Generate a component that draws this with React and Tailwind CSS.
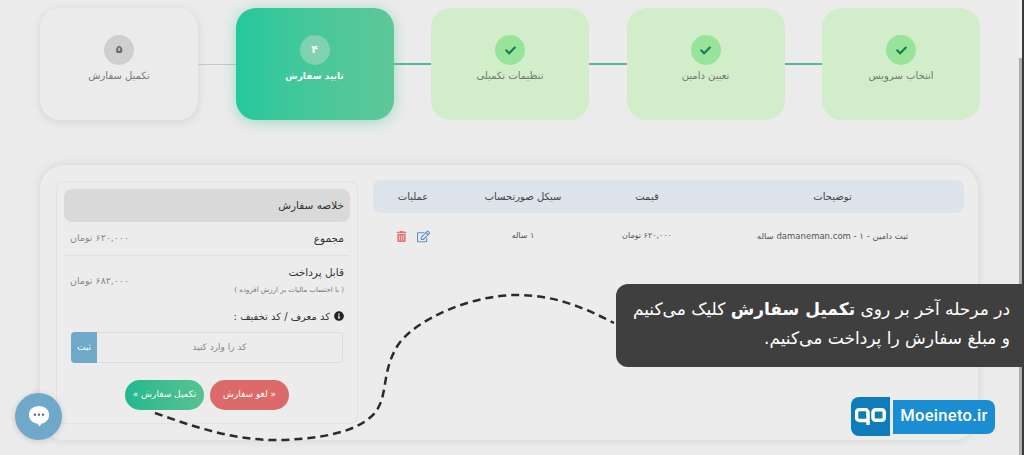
import React from 'react';
import { FaCheck, FaInfoCircle, FaRegEdit, FaTrashAlt } from 'react-icons/fa';

const font = 'font-["DejaVu_Sans","Noto_Sans",sans-serif]';

function StepCard({ label, mark, state }) {
  const cardClass = {
    todo: 'bg-[#ebebeb] shadow-[0_2px_10px_rgba(0,0,0,0.1)] text-[#777]',
    active: 'bg-gradient-to-r from-[#22c89c] to-[#5ec798] shadow-[0_2px_14px_rgba(40,190,140,0.4)] text-white font-bold',
    done: 'bg-[#d2edc9] text-[#6d7a6d]',
  }[state];
  const circleClass = {
    todo: 'bg-[#cfcfcf] text-[#666]',
    active: 'bg-[#7fd1b0] text-white',
    done: 'bg-[#98e49a] text-[#17804f]',
  }[state];

  return (
    <div className={`w-[158px] h-[112px] shrink-0 rounded-[20px] flex flex-col items-center pt-[27px] ${cardClass}`}>
      <div className={`w-[30px] h-[30px] rounded-full flex items-center justify-center text-[11px] font-bold ${circleClass}`}>
        {mark}
      </div>
      <div dir="rtl" className={`mt-[3px] leading-[16px] ${state === 'active' ? 'text-[9px]' : 'text-[10px]'}`}>{label}</div>
    </div>
  );
}

function Connector({ done }) {
  return (
    <div className="flex-1 h-[112px] flex items-center">
      <div className={`w-full ${done ? 'h-[2px] bg-[#58b7a0]' : 'h-px bg-[#bfcac6]'}`} />
    </div>
  );
}

function Steps() {
  return (
    <div className="flex">
      <StepCard label="تکمیل سفارش" mark="۵" state="todo" />
      <Connector />
      <StepCard label="تایید سفارش" mark="۴" state="active" />
      <Connector done />
      <StepCard label="تنظیمات تکمیلی" mark={<FaCheck size={11} />} state="done" />
      <Connector done />
      <StepCard label="تعیین دامین" mark={<FaCheck size={11} />} state="done" />
      <Connector done />
      <StepCard label="انتخاب سرویس" mark={<FaCheck size={11} />} state="done" />
    </div>
  );
}

function Summary() {
  return (
    <div dir="rtl" className="w-[302px] h-[243px] shrink-0 mt-px border border-[#e2e2e2] rounded-lg px-[7px] pt-[7px] text-[#333]">
      <div className="h-[33px] bg-[#d9d9d9] rounded-lg flex items-center px-[6px] text-[10.5px]">خلاصه سفارش</div>
      <div className="h-[34px] flex items-center justify-between px-[6px] border-b border-[#e0e0e0] text-[10.5px]">
        <span>مجموع</span>
        <span className="text-[#888] text-[9.5px]">۶۲۰,۰۰۰ تومان</span>
      </div>
      <div className="h-[50px] flex items-center justify-between px-[6px]">
        <div className="-mt-[2px]">
          <div className="text-[10.5px] leading-[16px]">قابل پرداخت</div>
          <div className="text-[7px] text-[#777] mt-[5px]">( با احتساب مالیات بر ارزش افزوده )</div>
        </div>
        <span className="text-[#888] text-[9.5px]">۶۸۲,۰۰۰ تومان</span>
      </div>
      <div className="flex items-center gap-1 px-[6px] mt-[3px] text-[10px] h-[14px]">
        <FaInfoCircle size={10} className="text-[#222]" />
        <span>کد معرف / کد تخفیف :</span>
      </div>
      <div className="mx-[7px] mt-[9px] h-[31px] flex border border-[#dcdcdc] rounded">
        <div className="flex-1 flex items-center justify-center text-[9px] text-[#888]">کد را وارد کنید</div>
        <div className="w-[26px] -my-px -ml-px bg-[#6fa8c9] rounded-l flex items-center justify-center text-white text-[9px]">ثبت</div>
      </div>
      <div className="flex justify-center gap-[6px] mt-[17px]">
        <button className="w-[79px] h-[30px] rounded-full bg-[#dc6a6a] text-white text-[9px]">« لغو سفارش</button>
        <button className="w-[79px] h-[30px] rounded-full bg-gradient-to-l from-[#56c292] to-[#1fb88e] text-white text-[9px]">تکمیل سفارش »</button>
      </div>
    </div>
  );
}

function OrderTable() {
  const cols = 'grid grid-cols-[80px_140px_108px_263px] text-center items-center';
  return (
    <div className="flex-1">
      <div className={`${cols} h-[33px] bg-[#dce3ea] rounded-lg text-[10px] text-[#444]`}>
        <span dir="rtl">عملیات</span>
        <span dir="rtl">سیکل صورتحساب</span>
        <span dir="rtl">قیمت</span>
        <span dir="rtl">توضیحات</span>
      </div>
      <div className={`${cols} h-[46px] text-[8px] text-[#555]`}>
        <span className="flex justify-center items-center gap-[10px]">
          <FaTrashAlt size={11} className="text-[#e57373]" />
          <FaRegEdit size={13} className="text-[#5b93c7]" />
        </span>
        <span dir="rtl">۱ ساله</span>
        <span dir="rtl">۶۲۰,۰۰۰ تومان</span>
        <span dir="rtl" className="text-[8.5px]">ثبت دامین - ۱ - damaneman.com ساله</span>
      </div>
    </div>
  );
}

export default function App() {
  return (
    <div className={`relative h-[455px] w-[1024px] overflow-hidden flex bg-[#ebebeb] ${font}`}>
      <div className="flex-1 pl-[40px] pr-[39px] pt-[8px]">
        <Steps />
        <div className="mt-[45px] mr-[2px] h-[275px] rounded-[24px] bg-[#ececec] shadow-[0_0_10px_rgba(0,0,0,0.1)] flex gap-[15px] pl-[16px] pr-[14px] pt-[15px]">
          <Summary />
          <OrderTable />
        </div>
      </div>

      {/* scrollbar */}
      <div className="w-[5px] flex">
        <div className="w-[3px] bg-[#f1f1f1] pt-[58px]">
          <div className="h-full bg-[#a8b0b0]" />
        </div>
        <div className="w-[2px] bg-[#3a3a3a]" />
      </div>

      {/* dashed arrow from the button to the note */}
      <svg className="absolute left-0 top-0" width="1024" height="455" fill="none">
        <path
          d="M155 413 C195 427 235 441 280 440 C320 439 362 432 377 410 C388 392 382 370 398 345 C415 320 470 295 517 295 C555 295 585 308 614 323"
          stroke="#2b2b2b"
          strokeWidth="2.5"
          strokeDasharray="8 5"
        />
      </svg>

      {/* note */}
      <div dir="rtl" className="absolute left-[616px] top-[284px] w-[408px] h-[83px] rounded-l-xl bg-[#3f3f3f] text-white text-[17px] leading-[29px] pr-[14px] pt-[11px]">
        <div>در مرحله آخر بر روی <b>تکمیل سفارش</b> کلیک می‌کنیم</div>
        <div>و مبلغ سفارش را پرداخت می‌کنیم.</div>
      </div>

      {/* logo */}
      <div className="absolute left-[851px] top-[397px] flex items-center gap-[3px]">
        <div className="w-[39px] h-[39px] rounded-l-lg bg-[#0e7cba] flex items-center justify-center">
          <svg width="31" height="17" viewBox="0 0 31 17" fill="none" stroke="#fff" strokeWidth="3.5">
            <path d="M13 12.5H4.5a3 3 0 0 1-3-3v-5a3 3 0 0 1 3-3H10a3 3 0 0 1 3 3V17" />
            <rect x="18" y="1.75" width="11.25" height="10.5" rx="2.5" />
          </svg>
        </div>
        <div className="w-[102px] h-[34px] rounded-r-lg bg-[#1b8dd3] flex items-center justify-center text-white text-[16.5px] font-['Roboto',sans-serif] font-medium tracking-[0.3px]">
          Moeineto.ir
        </div>
      </div>

      {/* chat button */}
      <div className="absolute left-[15px] top-[393px] w-[47px] h-[47px] rounded-full bg-[#6fa8c9] shadow-[0_1px_6px_rgba(0,0,0,0.15)] flex items-center justify-center">
        <svg width="22" height="23" viewBox="0 0 24 25">
          <path d="M12 1C5.5 1 1 4.8 1 10.5S5.5 20 10 20l2.5 3.5L15 20c4.5-.5 8-4 8-9.5S18.5 1 12 1z" fill="#fff" />
          <circle cx="7.5" cy="10.5" r="1.3" fill="#666" />
          <circle cx="12" cy="10.5" r="1.3" fill="#666" />
          <circle cx="16.5" cy="10.5" r="1.3" fill="#666" />
        </svg>
      </div>
    </div>
  );
}
